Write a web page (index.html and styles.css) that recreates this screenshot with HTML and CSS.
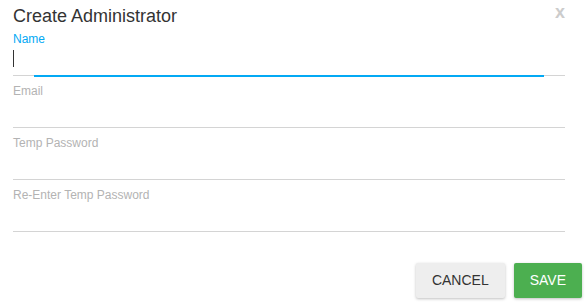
FILE: index.html
```html
<!DOCTYPE html>
<html lang="en">
<head>
<meta charset="utf-8">
<title>Create Administrator</title>
<link rel="stylesheet" href="styles.css">
</head>
<body>
<div class="dialog">
  <div class="header">
    <h2 class="title">Create Administrator</h2>
    <span class="close">x</span>
  </div>
  <form class="fields">
    <div class="field focused">
      <label class="label">Name</label>
      <div class="input"><span class="caret"></span></div>
      <span class="focus-bar"></span>
    </div>
    <div class="field">
      <label class="label">Email</label>
      <div class="input"></div>
    </div>
    <div class="field">
      <label class="label">Temp Password</label>
      <div class="input"></div>
    </div>
    <div class="field">
      <label class="label">Re-Enter Temp Password</label>
      <div class="input"></div>
    </div>
  </form>
  <div class="actions">
    <button class="btn btn-cancel" type="button">CANCEL</button>
    <button class="btn btn-save" type="button">SAVE</button>
  </div>
</div>
</body>
</html>
```
FILE: styles.css
```css
html, body {
  margin: 0;
  padding: 0;
  background: #ffffff;
}

body {
  font-family: "Liberation Sans", Arial, sans-serif;
  color: #333333;
}

.dialog {
  width: 588px;
  height: 306px;
  box-sizing: border-box;
  padding-top: 4px;
}

.header {
  display: flex;
  justify-content: space-between;
  align-items: flex-start;
  height: 20px;
  padding: 0 23px 0 13px;
}

.title {
  margin: 0;
  font-size: 18px;
  font-weight: normal;
  line-height: 24px;
  color: #333333;
}

.close {
  font-size: 18px;
  font-weight: bold;
  line-height: 17px;
  color: #cccccc;
}

.fields {
  margin: 0;
  padding: 0 23px 0 13px;
}

.field {
  position: relative;
  padding-top: 8px;
  border-bottom: 1px solid #d4d4d4;
}

.label {
  display: block;
  font-size: 12px;
  line-height: 14px;
  color: #b3b3b3;
}

.focused .label {
  color: #03a9f4;
}

.input {
  height: 29px;
  position: relative;
}

.caret {
  position: absolute;
  left: 0;
  top: 4px;
  width: 1px;
  height: 17px;
  background: #333333;
}

.focus-bar {
  position: absolute;
  left: 21px;
  right: 21px;
  bottom: -2px;
  height: 2px;
  background: #03a9f4;
}

.actions {
  display: flex;
  justify-content: flex-end;
  gap: 9px;
  padding: 31px 6px 0 0;
}

.btn {
  height: 35px;
  padding: 0 16px;
  border: none;
  border-radius: 2px;
  font-family: "Liberation Sans", Arial, sans-serif;
  font-size: 14px;
  line-height: 35px;
  box-shadow: 0 1px 3px rgba(0, 0, 0, 0.25);
}

.btn-cancel {
  background: #eeeeee;
  color: #333333;
}

.btn-save {
  background: #4caf50;
  color: #ffffff;
}
```
